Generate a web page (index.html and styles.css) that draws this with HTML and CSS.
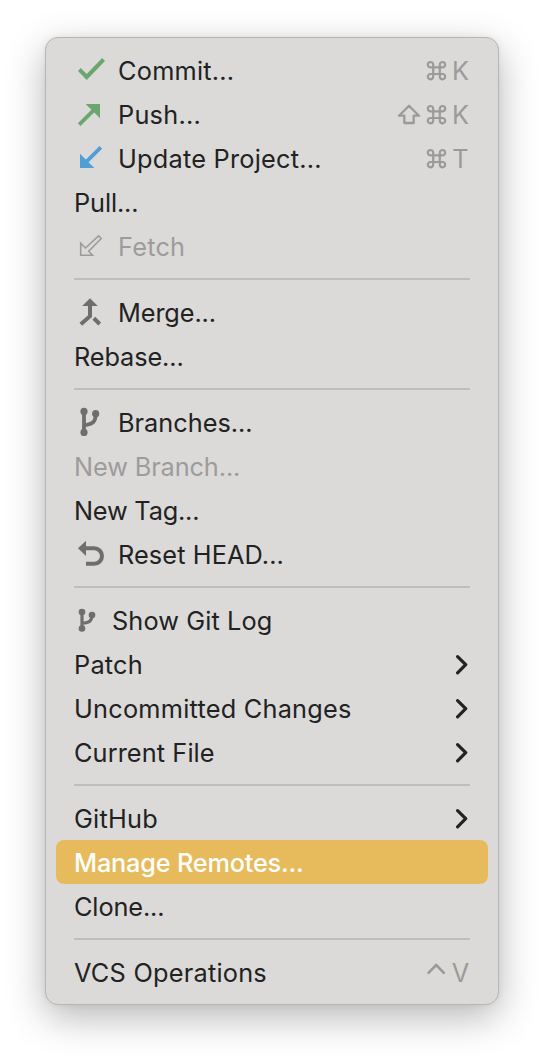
FILE: index.html
```html
<!DOCTYPE html>
<html lang="en">
<head>
<meta charset="utf-8">
<title>Git menu</title>
<link rel="stylesheet" href="styles.css">
</head>
<body>
<svg class="defs" aria-hidden="true">
  <symbol id="cmd" viewBox="0 0 23 44"><path d="M8.2 19.4h6.6v6.6H8.2zM8.2 19.4H5.6a2.7 2.7 0 1 1 2.6-2.7zM14.8 19.4h2.6a2.7 2.7 0 1 0-2.6-2.7zM8.2 26H5.6a2.7 2.7 0 1 0 2.6 2.7zM14.8 26h2.6a2.7 2.7 0 1 1-2.6 2.7z" fill="none" stroke="currentColor" stroke-width="2.2"/></symbol>
  <symbol id="chev" viewBox="0 0 14 44"><path d="M1.6 14.6 9.7 22.7 1.6 30.8" fill="none" stroke="currentColor" stroke-width="3.2" stroke-linecap="round" stroke-linejoin="round"/></symbol>
</svg>
<div class="menu">
  <div class="item"><svg class="icon green" viewBox="0 0 32 44"><path d="M4 22.9 6.7 20.1 12.7 26.1 28.1 10.1 31 13 12.7 32z" fill="currentColor"/></svg><span class="label wide">Commit...</span><span class="keys"><svg class="cmd"><use href="#cmd"/></svg><span class="key">K</span></span></div>
  <div class="item"><svg class="icon green" viewBox="0 0 32 44"><path d="M11.7 12H26V26.3z" fill="currentColor"/><path d="M5.2 32.6 21 16.8" stroke="currentColor" stroke-width="3.8"/></svg><span class="label wide">Push...</span><span class="keys"><svg class="shift" viewBox="0 0 24 44"><path d="M12 13.7 22 23.7H16.7V31H7.3V23.7H2z" fill="none" stroke="currentColor" stroke-width="2.3" stroke-linejoin="round"/></svg><svg class="cmd"><use href="#cmd"/></svg><span class="key">K</span></span></div>
  <div class="item"><svg class="icon blue" viewBox="0 0 32 44"><path d="M6 17.7V32H20.3z" fill="currentColor"/><path d="M11 27.2 26.8 11.4" stroke="currentColor" stroke-width="3.8"/></svg><span class="label wide">Update Project...</span><span class="keys"><svg class="cmd"><use href="#cmd"/></svg><span class="key">T</span></span></div>
  <div class="item"><span class="label tight">Pull...</span></div>
  <div class="item disabled"><svg class="icon" viewBox="0 0 32 44"><path d="M6.7 19.2V31.3H18.6L14.7 27.3 27.2 14.5 24.6 11.8 11.5 24z" fill="none" stroke="currentColor" stroke-width="1.6"/></svg><span class="label wide">Fetch</span></div>
  <div class="sep"></div>
  <div class="item"><svg class="icon gray" viewBox="0 0 32 44"><path d="M16 8.3 23.8 16H8.2z" fill="currentColor"/><path d="M16 15V26.2L6.8 34.2M19.8 28.2 25.7 34" fill="none" stroke="currentColor" stroke-width="4"/></svg><span class="label tight">Merge...</span></div>
  <div class="item"><span class="label tight">Rebase...</span></div>
  <div class="sep"></div>
  <div class="item"><svg class="icon gray" viewBox="0 0 32 44"><g fill="currentColor"><circle cx="10" cy="11.4" r="3.6"/><circle cx="21.7" cy="13.7" r="3.6"/><circle cx="10" cy="32.4" r="3.6"/></g><path d="M10 11V32M21.7 14C21.7 22 19 23.8 10 25.5" fill="none" stroke="currentColor" stroke-width="3.8"/></svg><span class="label">Branches...</span></div>
  <div class="item disabled"><span class="label tight">New Branch...</span></div>
  <div class="item"><span class="label tighter">New Tag...</span></div>
  <div class="item"><svg class="icon gray" viewBox="0 0 32 44"><path d="M4 16.3 12 8.7V24z" fill="currentColor"/><path d="M11 16.2H20.2a7.8 7.8 0 0 1 0 15.6H12" fill="none" stroke="currentColor" stroke-width="4"/></svg><span class="label loose">Reset HEAD...</span></div>
  <div class="sep"></div>
  <div class="item"><svg class="icon small gray" viewBox="0 0 26 44"><g fill="currentColor"><circle cx="8" cy="14" r="3.3"/><circle cx="18" cy="17" r="3.3"/><circle cx="8" cy="30.5" r="3.3"/></g><path d="M8 14V30.5M18 17C18 22.5 16 24.5 8 25.3" fill="none" stroke="currentColor" stroke-width="3.2"/></svg><span class="label loose">Show Git Log</span></div>
  <div class="item"><span class="label wide">Patch</span><svg class="chev"><use href="#chev"/></svg></div>
  <div class="item"><span class="label wide">Uncommitted Changes</span><svg class="chev"><use href="#chev"/></svg></div>
  <div class="item"><span class="label loose">Current File</span><svg class="chev"><use href="#chev"/></svg></div>
  <div class="sep"></div>
  <div class="item"><span class="label wide">GitHub</span><svg class="chev"><use href="#chev"/></svg></div>
  <div class="item selected"><span class="label tighter">Manage Remotes...</span></div>
  <div class="item"><span class="label tight">Clone...</span></div>
  <div class="sep"></div>
  <div class="item"><span class="label wide">VCS Operations</span><span class="keys"><svg class="cmd" viewBox="0 0 23 44"><path d="M3.5 22.8 11.2 15 18.9 22.8" fill="none" stroke="currentColor" stroke-width="2.6" stroke-linecap="round" stroke-linejoin="round"/></svg><span class="key">V</span></span></div>
</div>
</body>
</html>
```

FILE: styles.css
```css
* { box-sizing: border-box; }
body { margin: 0; min-height: 1058px; padding: 37px 45px; background: #fff; font-family: Inter, "Liberation Sans", sans-serif; }
.defs { position: absolute; width: 0; height: 0; }
.menu {
  width: 454px; height: 968px; padding: 10px; border: 1px solid #b5b5b5; border-radius: 13px;
  background: #dbdad9; box-shadow: 0 12px 38px rgba(0,0,0,.29), 0 0 6px rgba(0,0,0,.06);
}
.item {
  display: flex; align-items: center; height: 44px; padding: 0 18px; border-radius: 8px;
  color: #222; font-size: 25.3px; line-height: 44px; white-space: nowrap;
}
.label { padding-top: 2px; }
.wide { letter-spacing: .24px; }
.loose { letter-spacing: .1px; }
.tight { letter-spacing: -.11px; }
.tighter { letter-spacing: -.2px; }
.icon { width: 32px; height: 44px; margin-right: 12px; flex: none; }
.icon.small { width: 26px; }
.green { color: #6aa66e; }
.blue { color: #4f9fd6; }
.gray { color: #6e6e6e; }
.disabled { color: #9d9c9b; }
.selected { background: #e7bb5b; color: #fff; font-weight: 500; }
.sep { height: 2px; margin: 10px 18px; background: #bfbebd; }
.keys { display: flex; gap: 4px; margin-left: auto; color: #9b9a99; }
.key { display: flex; justify-content: center; width: 18px; padding: 1px 1px 0 0; }
.cmd { width: 23px; height: 44px; }
.shift { width: 24px; height: 44px; }
.chev { width: 14px; height: 44px; margin-left: auto; }
```
